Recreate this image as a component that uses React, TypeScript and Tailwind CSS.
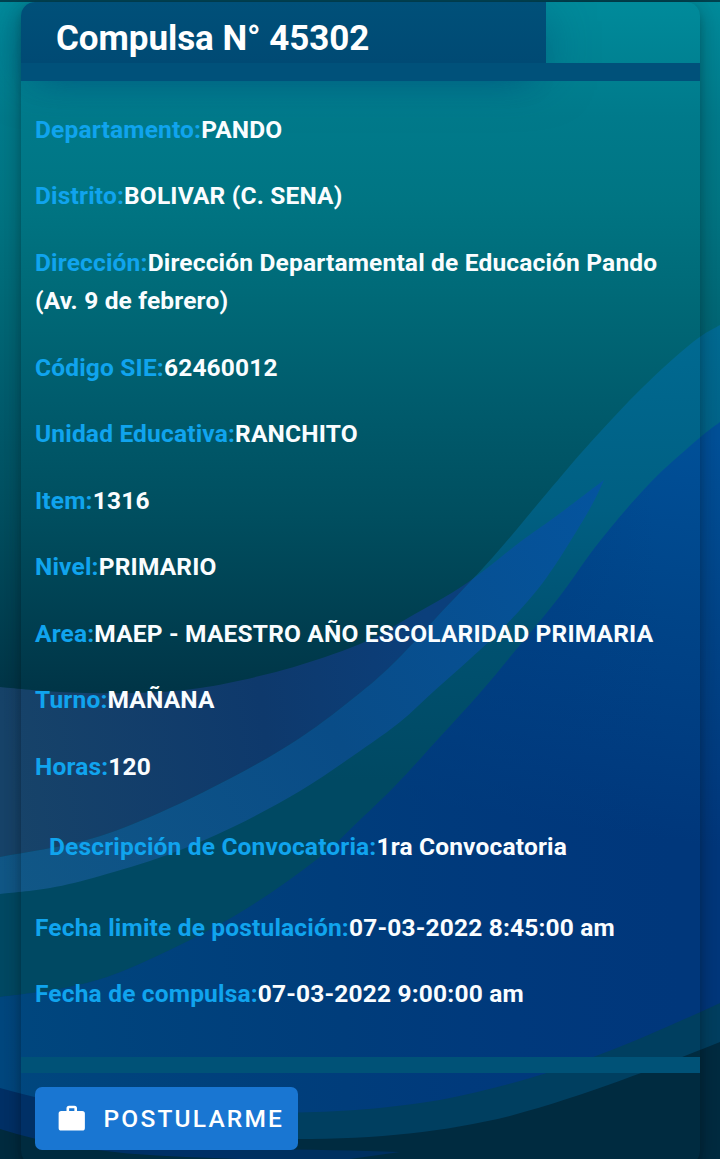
import React from "react";

type Field = { label: string; value: string; inset?: boolean };
type Point = [number, number];

const fields: Field[] = [
  { label: "Departamento:", value: "PANDO" },
  { label: "Distrito:", value: "BOLIVAR (C. SENA)" },
  { label: "Dirección:", value: "Dirección Departamental de Educación Pando (Av. 9 de febrero)" },
  { label: "Código SIE:", value: "62460012" },
  { label: "Unidad Educativa:", value: "RANCHITO" },
  { label: "Item:", value: "1316" },
  { label: "Nivel:", value: "PRIMARIO" },
  { label: "Area:", value: "MAEP - MAESTRO AÑO ESCOLARIDAD PRIMARIA" },
  { label: "Turno:", value: "MAÑANA" },
  { label: "Horas:", value: "120" },
  { label: "Descripción de Convocatoria:", value: "1ra Convocatoria", inset: true },
  { label: "Fecha limite de postulación:", value: "07-03-2022 8:45:00 am" },
  { label: "Fecha de compulsa:", value: "07-03-2022 9:00:00 am" },
];

/** Smooth curve segments through the points, starting from the current pen position at points[0]. */
const curve = (points: Point[]) =>
  points
    .slice(0, -1)
    .map((p1, i) => {
      const p0 = points[i - 1] ?? p1;
      const p2 = points[i + 1];
      const p3 = points[i + 2] ?? p2;
      const c1 = [p1[0] + (p2[0] - p0[0]) / 6, p1[1] + (p2[1] - p0[1]) / 6];
      const c2 = [p2[0] - (p3[0] - p1[0]) / 6, p2[1] - (p3[1] - p1[1]) / 6];
      return `C${c1.join(" ")} ${c2.join(" ")} ${p2.join(" ")}`;
    })
    .join("");

const bandTop: Point[] = [[720, 325], [693, 342], [643, 387], [590, 443], [547, 493], [493, 557], [437, 617], [397, 660], [360, 693], [300, 738], [233, 777], [150, 817], [83, 841], [0, 857]];
const blueTop: Point[] = [[720, 422], [697, 440], [650, 483], [600, 541], [560, 596], [520, 645], [480, 693], [440, 737], [397, 784], [360, 820], [315, 861], [233, 917], [133, 967], [70, 987], [0, 997]];
const leafTop: Point[] = [[0, 687], [60, 692], [133, 693], [200, 688], [283, 670], [360, 644], [408, 618], [467, 583], [520, 542], [555, 517], [604, 480]];
const leafBottom: Point[] = [[604, 480], [588, 512], [547, 577], [507, 624], [470, 659], [433, 692], [400, 722], [360, 751], [300, 791], [233, 827], [167, 855], [100, 876], [50, 888], [0, 894]];

const bandPath = `M720 325${curve(bandTop)}V1159H720Z`;
const bluePath = `M720 422${curve(blueTop)}V1159H720Z`;
const leafPath = `M0 687${curve(leafTop)}${curve(leafBottom)}Z`;

const Backdrop = () => (
  <svg className="absolute inset-0 h-full w-full" viewBox="0 0 720 1159" preserveAspectRatio="none" aria-hidden="true">
    <defs>
      <linearGradient id="base" gradientUnits="userSpaceOnUse" x1="0" y1="0" x2="0" y2="690">
        <stop offset="0" stopColor="#008b9b" />
        <stop offset="0.17" stopColor="#007a8b" />
        <stop offset="0.29" stopColor="#007583" />
        <stop offset="0.435" stopColor="#006977" />
        <stop offset="0.58" stopColor="#005c6d" />
        <stop offset="0.75" stopColor="#004e5f" />
        <stop offset="1" stopColor="#003547" />
      </linearGradient>
      <linearGradient id="band" gradientUnits="userSpaceOnUse" x1="0" y1="330" x2="0" y2="780">
        <stop offset="0" stopColor="#006a92" />
        <stop offset="0.4" stopColor="#005f82" />
        <stop offset="0.65" stopColor="#005272" />
        <stop offset="1" stopColor="#004963" />
      </linearGradient>
      <linearGradient id="blue" gradientUnits="userSpaceOnUse" x1="660" y1="430" x2="600" y2="830">
        <stop offset="0" stopColor="#005098" />
        <stop offset="0.45" stopColor="#004488" />
        <stop offset="1" stopColor="#00377b" />
      </linearGradient>
      <linearGradient id="blueLeft" gradientUnits="userSpaceOnUse" x1="0" y1="1000" x2="680" y2="960">
        <stop offset="0" stopColor="#00477e" />
        <stop offset="0.5" stopColor="#003f7b" stopOpacity="0.75" />
        <stop offset="1" stopColor="#003a80" stopOpacity="0" />
      </linearGradient>
      <linearGradient id="navy" gradientUnits="userSpaceOnUse" x1="0" y1="700" x2="430" y2="650">
        <stop offset="0" stopColor="#174369" />
        <stop offset="0.6" stopColor="#0e396c" />
        <stop offset="1" stopColor="#0b3f7b" />
      </linearGradient>
      <linearGradient id="overlap" gradientUnits="userSpaceOnUse" x1="0" y1="870" x2="600" y2="490">
        <stop offset="0" stopColor="#115786" />
        <stop offset="0.5" stopColor="#094c87" />
        <stop offset="1" stopColor="#04549e" />
      </linearGradient>
      <clipPath id="bandClip">
        <path d={bandPath} />
      </clipPath>
    </defs>
    <path d="M0 0H720V1159H0Z" fill="url(#base)" />
    <path d={leafPath} fill="url(#navy)" />
    <path d={bandPath} fill="url(#band)" />
    <path d={leafPath} fill="url(#overlap)" clipPath="url(#bandClip)" />
    <path d={bluePath} fill="url(#blue)" />
    <path d={bluePath} fill="url(#blueLeft)" />
    <path d="M0 1088C70 1108 170 1126 298 1139V1159H0Z" fill="#003066" />
    <path d="M720 1003C620 1049 550 1078 440 1100C370 1111 330 1112 280 1113V1140H720Z" fill="#003f60" />
    <path d="M720 1042C650 1070 590 1094 510 1116C440 1133 370 1140 280 1139V1159H720Z" fill="#002b40" />
    <path d="M0 1129C90 1157 170 1156 240 1159H0Z" fill="#002b3f" />
    <path d="M240 1148C300 1150 355 1150 400 1152L350 1159H240Z" fill="#003060" />
    <path d="M0 0H720V2H0Z" fill="#00424f" />
  </svg>
);

const App = () => (
  <main className="relative h-[1159px] w-[720px] overflow-hidden bg-[#00505f] font-['Roboto',sans-serif] text-[24.5px] leading-[38.5px] font-bold tracking-[0.175px]">
    <Backdrop />
    <div className="relative pt-0.5 pr-5 pl-[21px]">
      <article className="h-[1163px] rounded-[14px] shadow-[0_5px_9px_-2px_rgba(0,0,0,0.2),0_9px_18px_rgba(0,0,0,0.15),0_2px_24px_rgba(0,0,0,0.15)]">
        <header className="h-[61px]">
          <h1 className="h-[61px] w-[525px] rounded-tl-[14px] bg-linear-to-b from-[#005079] to-[#004a74] pt-[9px] pl-[35px] text-[35px] leading-[56px] font-bold tracking-[-0.06px] text-white shadow-[0_34px_30px_-24px_rgba(0,72,125,0.8),0_14px_50px_-4px_rgba(0,72,115,0.6)]">
            Compulsa N° 45302
          </h1>
        </header>
        <div className="relative h-[18px] bg-[#00517a]" />
        <dl className="relative px-3.5 pt-[15.5px] text-[#fafdff]">
          {fields.map(({ label, value, inset }) => (
            <div key={label} className={inset ? "px-3.5 pt-7 pb-7" : "py-3.5"}>
              <dt className="inline text-[#10a4ee]">{label}</dt>
              <dd className="inline">{value}</dd>
            </div>
          ))}
        </dl>
        <div className="mt-[29.5px] h-4 bg-[#005277]" />
        <footer className="px-3.5 pt-3.5">
          <button className="flex h-[63px] w-[263px] items-center rounded-[7px] bg-[#1976d2] pt-px pl-[21px] text-[24.5px] font-medium tracking-[2.19px] text-white">
            <svg className="mr-4 -mt-px h-[31.5px] w-[31.5px] shrink-0" viewBox="0 0 24 24" fill="currentColor" aria-hidden="true">
              <path d="M10 2H14A2 2 0 0 1 16 4V6H20A2 2 0 0 1 22 8V19A2 2 0 0 1 20 21H4A2 2 0 0 1 2 19V8A2 2 0 0 1 4 6H8V4A2 2 0 0 1 10 2M14 6V4H10V6H14Z" />
            </svg>
            POSTULARME
          </button>
        </footer>
      </article>
    </div>
  </main>
);

export default App;
